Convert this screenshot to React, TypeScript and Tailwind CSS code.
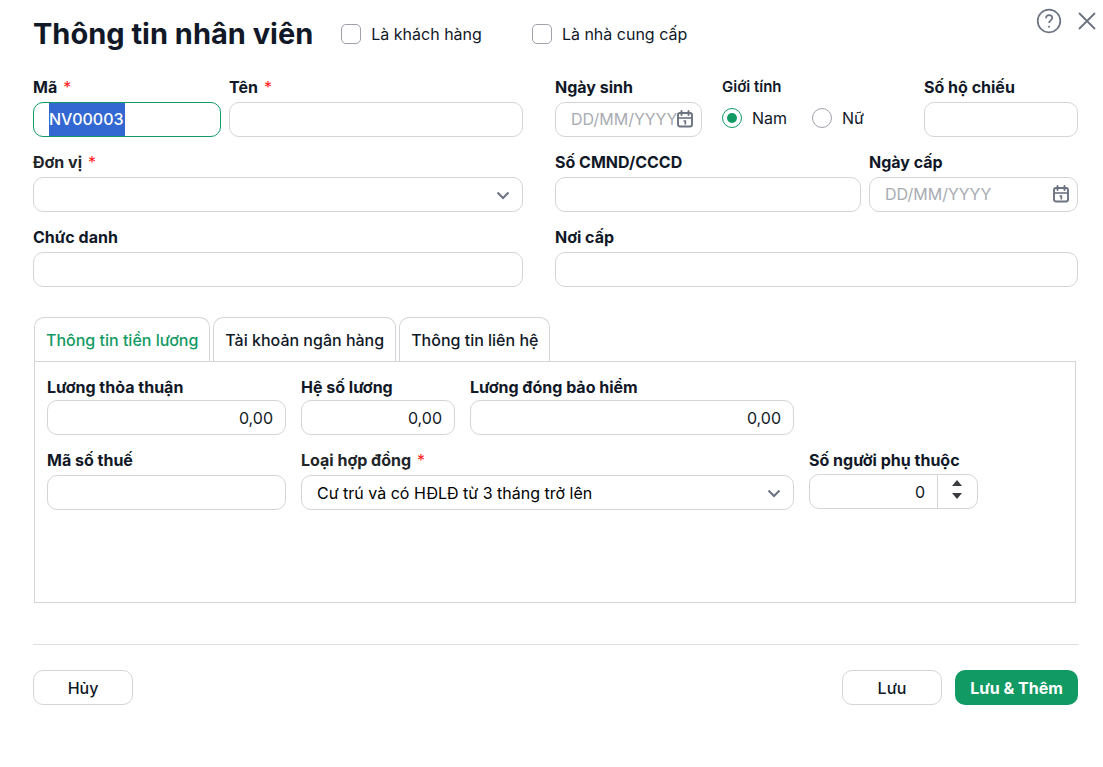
import { useEffect, useRef, useState } from "react";
import type { ReactNode } from "react";
import clsx from "clsx";

const control =
  "h-[35px] w-full min-w-0 rounded-[10px] border border-[#d4d5d9] px-[15px] text-base outline-none focus:border-[#119a63]";

const tabs = [
  { id: "salary", name: "Thông tin tiền lương" },
  { id: "bank", name: "Tài khoản ngân hàng" },
  { id: "contact", name: "Thông tin liên hệ" },
];

export default function App() {
  return (
    <form
      className="w-full bg-white pb-16 font-['Inter','Noto_Sans',sans-serif] text-base text-[#111827]"
      onSubmit={(e) => e.preventDefault()}
    >
      <Header />
      <div className="pr-[25px] pl-[33px]">
        <GeneralInfo />
        <DetailTabs />
        <Footer />
      </div>
    </form>
  );
}

function Header() {
  return (
    <header className="flex items-start justify-between pt-2 pr-[7px] pl-[33px]">
      <div className="flex items-center pt-2">
        <h1 className="text-[29px] leading-9 font-bold">Thông tin nhân viên</h1>
        <div className="ml-7 flex gap-[50px]">
          <CheckOption id="is-customer" label="Là khách hàng" />
          <CheckOption id="is-vendor" label="Là nhà cung cấp" />
        </div>
      </div>
      <div className="flex items-center gap-4 text-[#6b7280]">
        <button type="button" aria-label="Trợ giúp">
          <HelpIcon />
        </button>
        <button type="button" aria-label="Đóng">
          <CloseIcon />
        </button>
      </div>
    </header>
  );
}

function CheckOption({ id, label }: { id: string; label: string }) {
  return (
    <div className="flex items-center gap-2.5">
      <input
        id={id}
        type="checkbox"
        className="size-5 appearance-none rounded-[5px] border border-[#9fa1aa] bg-clip-content p-1 checked:border-[#119a63] checked:bg-[#119a63]"
      />
      <label htmlFor={id}>{label}</label>
    </div>
  );
}

type FieldProps = {
  id: string;
  label: string;
  required?: boolean;
  className?: string;
  children: ReactNode;
};

function Field({ id, label, required, className, children }: FieldProps) {
  return (
    <div className={clsx("flex min-w-0 flex-col", className ?? "gap-[3px]")}>
      <label htmlFor={id} className="leading-6 font-bold whitespace-nowrap">
        {label}
        {required && <span className="ml-1.5 font-normal text-[#ff1a1a]">*</span>}
      </label>
      {children}
    </div>
  );
}

function CodeInput({ id }: { id: string }) {
  const ref = useRef<HTMLInputElement>(null);
  const [allSelected, setAllSelected] = useState(true);

  useEffect(() => {
    ref.current?.focus();
    ref.current?.select();
  }, []);

  return (
    <input
      ref={ref}
      id={id}
      type="text"
      defaultValue="NV00003"
      onSelect={(e) => {
        const el = e.currentTarget;
        setAllSelected(
          el.value.length === 7 &&
            el.selectionStart === 0 &&
            el.selectionEnd === el.value.length,
        );
      }}
      onBlur={() => setAllSelected(false)}
      className={clsx(
        control,
        "pb-0.5 font-medium selection:bg-[#3367d1] selection:text-white",
        // extends the highlight to the full height of the box
        allSelected &&
          "bg-[linear-gradient(#3367d1,#3367d1)] bg-[length:76px_100%] bg-[position:15px_0] bg-no-repeat",
      )}
    />
  );
}

function GeneralInfo() {
  return (
    <div className="grid grid-cols-[490fr_523fr] gap-x-8 pt-[23px]">
      <div className="flex flex-col gap-[13px]">
        <div className="grid grid-cols-[188fr_294fr] gap-2">
          <Field id="code" label="Mã" required>
            <CodeInput id="code" />
          </Field>
          <Field id="name" label="Tên" required>
            <input id="name" type="text" className={control} />
          </Field>
        </div>
        <Field id="unit" label="Đơn vị" required className="gap-[3px] text-[#212529]">
          <SelectBox id="unit" options={[""]} />
        </Field>
        <Field id="title" label="Chức danh">
          <input id="title" type="text" className={control} />
        </Field>
      </div>

      <div className="flex flex-col gap-[13px]">
        <div className="grid grid-cols-[147fr_222fr_154fr]">
          <Field id="birthday" label="Ngày sinh">
            <DateBox id="birthday" />
          </Field>
          <GenderField />
          <Field id="passport" label="Số hộ chiếu">
            <input id="passport" type="text" className={control} />
          </Field>
        </div>
        <div className="grid grid-cols-[306fr_209fr] gap-2">
          <Field id="id-number" label="Số CMND/CCCD">
            <input id="id-number" type="text" className={control} />
          </Field>
          <Field id="issue-date" label="Ngày cấp">
            <DateBox id="issue-date" />
          </Field>
        </div>
        <Field id="issue-place" label="Nơi cấp">
          <input id="issue-place" type="text" className={control} />
        </Field>
      </div>
    </div>
  );
}

function GenderField() {
  return (
    <fieldset className="min-w-0 pl-5">
      <legend className="text-[15px] leading-6 font-semibold">Giới tính</legend>
      <div className="flex gap-[25px] pt-[7px]">
        {["Nam", "Nữ"].map((name, index) => (
          <label key={name} className="flex items-center gap-2.5">
            <input
              type="radio"
              name="gender"
              defaultChecked={index === 0}
              className="size-5 appearance-none rounded-full border border-[#9fa1aa] bg-clip-content p-1 checked:border-[#119a63] checked:bg-[#119a63]"
            />
            {name}
          </label>
        ))}
      </div>
    </fieldset>
  );
}

function DateBox({ id }: { id: string }) {
  return (
    <div className="relative">
      <input
        id={id}
        type="text"
        placeholder="DD/MM/YYYY"
        className={clsx(control, "pr-2 pb-0.5 placeholder:text-[#a8abb2]")}
      />
      <button
        type="button"
        aria-label="Chọn ngày"
        className="absolute top-2 right-[9px] text-[#6b7280]"
      >
        <CalendarIcon />
      </button>
    </div>
  );
}

function SelectBox({ id, options }: { id: string; options: string[] }) {
  return (
    <div className="relative">
      <select id={id} className={clsx(control, "appearance-none pr-9 text-black")}>
        {options.map((option) => (
          <option key={option}>{option}</option>
        ))}
      </select>
      <svg
        viewBox="0 0 14 10"
        className="pointer-events-none absolute top-[14px] right-[13px] h-2.5 w-3.5"
        fill="none"
        stroke="#6b7280"
        strokeWidth="2"
      >
        <path d="M1.5 1.5 7 7l5.500-5.500" />
      </svg>
    </div>
  );
}

function DetailTabs() {
  const [active, setActive] = useState("salary");

  return (
    <div className="mt-[30px] mr-0.5 ml-px">
      <div role="tablist" className="flex gap-[3px]">
        {tabs.map((tab) => (
          <button
            key={tab.id}
            type="button"
            role="tab"
            aria-selected={active === tab.id}
            onClick={() => setActive(tab.id)}
            className={clsx(
              "h-11 rounded-t-[10px] border border-b-0 border-[#d4d5d9] px-[11px] font-medium",
              { "text-[#119a63]": active === tab.id },
            )}
          >
            {tab.name}
          </button>
        ))}
      </div>
      <div
        role="tabpanel"
        className="min-h-[242px] border border-[#d4d5d9] px-3 pt-[13px]"
      >
        {active === "salary" && <SalaryPanel />}
      </div>
    </div>
  );
}

function SalaryPanel() {
  return (
    <div className="grid grid-cols-[239fr_154fr_324fr_169fr_70fr] gap-x-[15px] gap-y-[13px]">
      <AmountField id="agreed" label="Lương thỏa thuận" />
      <AmountField id="ratio" label="Hệ số lương" />
      <AmountField id="insurance" label="Lương đóng bảo hiểm" />
      <Field id="tax-code" label="Mã số thuế" className="col-start-1 gap-[3px]">
        <input id="tax-code" type="text" className={control} />
      </Field>
      <Field
        id="contract"
        label="Loại hợp đồng"
        required
        className="col-span-2 gap-[3px] text-[#212529]"
      >
        <SelectBox id="contract" options={["Cư trú và có HĐLĐ từ 3 tháng trở lên"]} />
      </Field>
      <Field id="dependents" label="Số người phụ thuộc" className="gap-0.5">
        <Stepper id="dependents" />
      </Field>
    </div>
  );
}

function AmountField({ id, label }: { id: string; label: string }) {
  return (
    <Field id={id} label={label} className="gap-px">
      <input
        id={id}
        type="text"
        defaultValue="0,00"
        className={clsx(control, "pr-3 text-right")}
      />
    </Field>
  );
}

function Stepper({ id }: { id: string }) {
  const [count, setCount] = useState(0);

  return (
    <div className="flex h-[35px] rounded-[10px] border border-[#d4d5d9]">
      <input
        id={id}
        type="text"
        value={count}
        onChange={(e) => setCount(Number(e.target.value) || 0)}
        className="min-w-0 flex-1 rounded-l-[10px] pr-3 text-right outline-none"
      />
      <div className="flex w-10 flex-col items-center justify-center gap-[7px] border-l border-[#d4d5d9] pr-0.5 pb-1 text-[#3b3d41]">
        <button type="button" aria-label="Tăng" onClick={() => setCount(count + 1)}>
          <svg viewBox="0 0 10 6" className="block h-1.5 w-2.5" fill="currentColor">
            <path d="M5 0 10 6H0z" />
          </svg>
        </button>
        <button
          type="button"
          aria-label="Giảm"
          onClick={() => setCount(Math.max(0, count - 1))}
        >
          <svg viewBox="0 0 10 6" className="block h-1.5 w-2.5" fill="currentColor">
            <path d="M5 6 0 0h10z" />
          </svg>
        </button>
      </div>
    </div>
  );
}

function Footer() {
  return (
    <footer className="mt-[41px] flex gap-[13px] border-t border-[#dcdddf] pt-[25px]">
      <button
        type="button"
        className="mr-auto h-[35px] w-[100px] rounded-[10px] border border-[#d4d5d9] font-medium"
      >
        Hủy
      </button>
      <button
        type="button"
        className="h-[35px] w-[100px] rounded-[10px] border border-[#d4d5d9] font-medium"
      >
        Lưu
      </button>
      <button
        type="submit"
        className="h-[35px] w-[123px] rounded-[10px] bg-[#119a63] font-bold text-white"
      >
        Lưu & Thêm
      </button>
    </footer>
  );
}

function HelpIcon() {
  return (
    <svg viewBox="0 0 26 26" className="block size-[26px]" fill="none" stroke="currentColor">
      <circle cx="13" cy="13" r="11.300" strokeWidth="1.700" />
      <path
        d="M10 10.200c0-1.900 1.300-3.100 3.100-3.100s3.100 1.200 3.100 2.900c0 2.300-3.100 2.500-3.100 5"
        strokeWidth="1.700"
      />
      <circle cx="13" cy="18.800" r="1" fill="currentColor" stroke="none" />
    </svg>
  );
}

function CloseIcon() {
  return (
    <svg
      viewBox="0 0 18 18"
      className="block size-[18px]"
      fill="none"
      stroke="currentColor"
      strokeWidth="1.800"
      strokeLinecap="round"
    >
      <path d="M1.500 1.500l15 15M16.500 1.500l-15 15" />
    </svg>
  );
}

function CalendarIcon() {
  return (
    <svg viewBox="0 0 16 18" className="block h-[18px] w-4" fill="none" stroke="currentColor">
      <rect x="1" y="3" width="14" height="13.500" rx="2" strokeWidth="1.900" />
      <path d="M1 8h14" strokeWidth="1.600" />
      <path d="M4.500 1v4M11.500 1v4" strokeWidth="1.900" strokeLinecap="round" />
      <path d="M6.500 11h1.800v3.500" strokeWidth="1.700" />
    </svg>
  );
}
